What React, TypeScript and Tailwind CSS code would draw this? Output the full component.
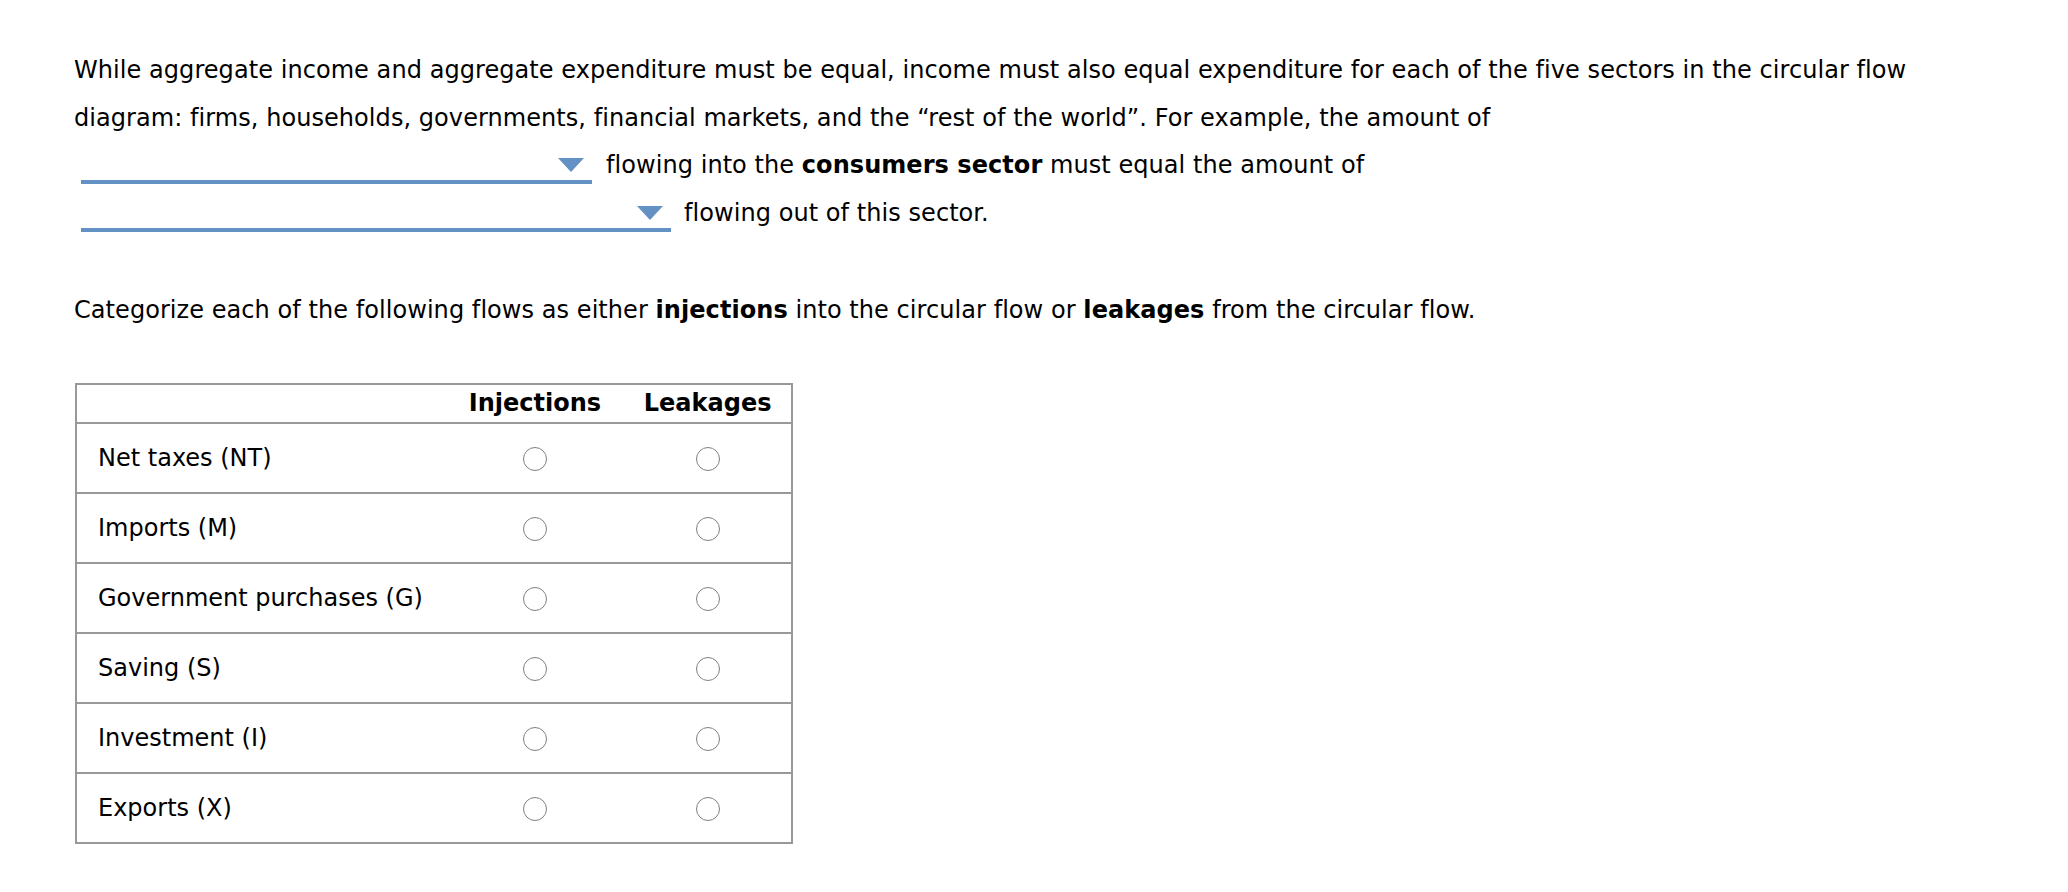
import React from 'react';

const rows = [
  'Net taxes (NT)',
  'Imports (M)',
  'Government purchases (G)',
  'Saving (S)',
  'Investment (I)',
  'Exports (X)',
];

const Dropdown: React.FC<{ width: string }> = ({ width }) => (
  <div className={`${width} ml-[7px] h-[42px] self-start flex items-end justify-end pb-[8px] pr-[8px] border-b-4 border-[#6391c4]`}>
    <svg width="26" height="14" viewBox="0 0 26 14">
      <polygon points="0,0 26,0 13,14" fill="#6391c4" />
    </svg>
  </div>
);

const Radio: React.FC = () => (
  <span className="inline-block w-[24px] h-[24px] rounded-full border-[1.5px] border-[#7f7f7f] bg-white align-middle" />
);

export default function App() {
  return (
    <div className="min-h-screen bg-white text-black pl-[74px] pt-[47px] text-[24px] leading-[47.5px] tracking-[0.06px]" style={{ fontFamily: '"DejaVu Sans", Verdana, sans-serif' }}>
      <div className="whitespace-nowrap">
        While aggregate income and aggregate expenditure must be equal, income must also equal expenditure for each of the five sectors in the circular flow
      </div>
      <div className="whitespace-nowrap">
        diagram: firms, households, governments, financial markets, and the “rest of the world”. For example, the amount of
      </div>
      <div className="flex h-[47.5px] items-center whitespace-nowrap">
        <Dropdown width="w-[511px]" />
        <span className="ml-[14px]">
          flowing into the <b>consumers sector</b> must equal the amount of
        </span>
      </div>
      <div className="flex h-[47.5px] items-center whitespace-nowrap">
        <Dropdown width="w-[590px]" />
        <span className="ml-[13px]">flowing out of this sector.</span>
      </div>

      <div className="mt-[50px] whitespace-nowrap">
        Categorize each of the following flows as either <b>injections</b> into the circular flow or <b>leakages</b> from the circular flow.
      </div>

      <table className="mt-[48px] ml-[1px] border-collapse border-2 border-[#999999] w-[718px] leading-normal tracking-normal">
        <thead>
          <tr className="h-[39px]">
            <th className="w-[371px] border-b-2 border-[#999999]"></th>
            <th className="w-[179px] border-b-2 border-[#999999] text-center font-bold">Injections</th>
            <th className="w-[168px] border-b-2 border-[#999999] text-center font-bold">Leakages</th>
          </tr>
        </thead>
        <tbody>
          {rows.map((label) => (
            <tr key={label} className="h-[70px]">
              <td className="border-b-2 border-[#999999] pl-[21px] text-left">{label}</td>
              <td className="border-b-2 border-[#999999] text-center">
                <Radio />
              </td>
              <td className="border-b-2 border-[#999999] text-center">
                <Radio />
              </td>
            </tr>
          ))}
        </tbody>
      </table>
    </div>
  );
}
